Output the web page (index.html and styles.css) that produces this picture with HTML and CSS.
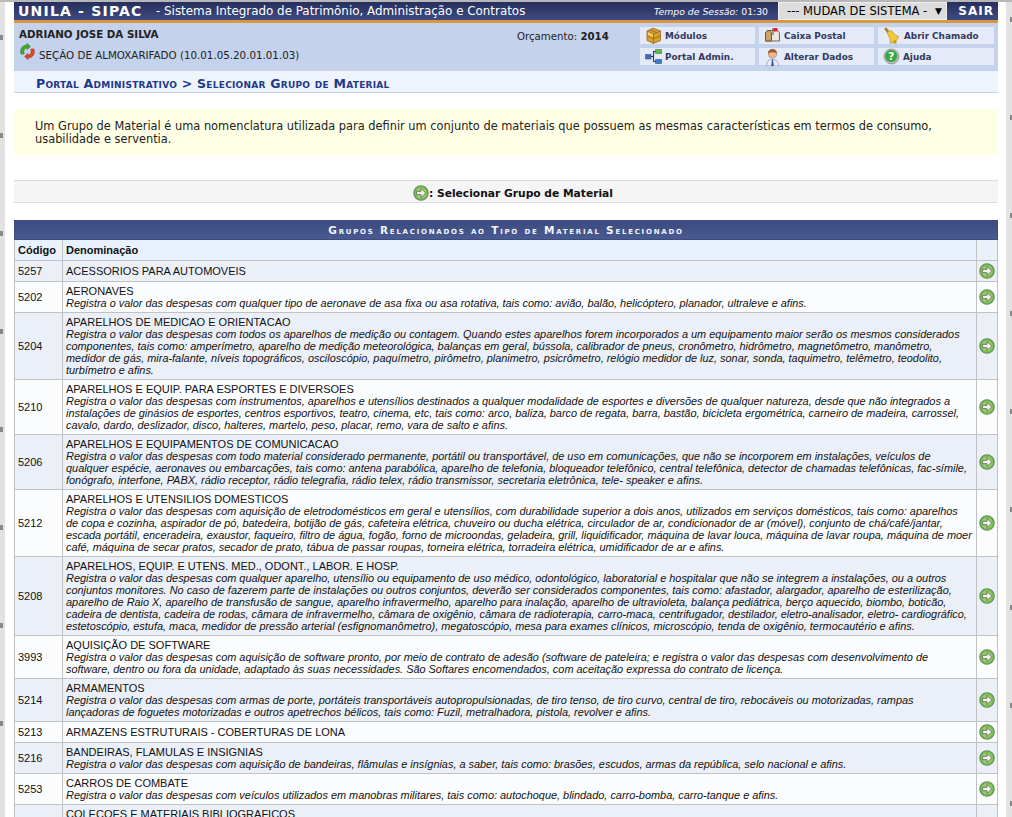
FILE: index.html
```html
<!DOCTYPE html>
<html lang="pt-BR">
<head>
	<meta charset="UTF-8">
	<title>SIPAC - Selecionar Grupo de Material</title>
	<link rel="stylesheet" href="styles.css">
</head>
<body>
	<svg class="defs" width="0" height="0">
		<symbol id="seta" viewBox="0 0 16 16">
			<circle cx="8" cy="8" r="7.2" fill="#7cba52" stroke="#5d8f5a" stroke-width="1.1"/>
			<circle cx="8" cy="8" r="5.2" fill="#9ccf6a"/>
			<path d="M3.6 6.3H8V3.4L12.8 8 8 12.6V9.7H3.6z" fill="#f2f2ee" stroke="#5f6f5c" stroke-width=".9"/>
		</symbol>
	</svg>

	<div class="pagina">
		<div class="topo">
			<span class="topo_sigla">UNILA - SIPAC</span>
			<span class="topo_nome">- Sistema Integrado de Patrimônio, Administração e Contratos</span>
			<span class="topo_tempo"><em>Tempo de Sessão:</em> 01:30</span>
			<div class="topo_sistema"><span>--- MUDAR DE SISTEMA -</span><span class="topo_seta">▼</span></div>
			<a class="topo_sair">SAIR</a>
		</div>

		<div class="info">
			<div class="info_usuario">
				<strong>ADRIANO JOSE DA SILVA</strong>
				<div class="info_unidade">
					<svg width="17" height="17" viewBox="0 0 17 17">
						<path d="M2 11C.6 6 3.5 2 8 2V.4l3.4 3L8 6.500V4.800C5.500 5 4 8 5.300 11z" fill="#45a832" stroke="#2d7a24" stroke-width=".6"/>
						<path d="M15 6c1.400 5-1.500 9-6 9v1.600l-3.400-3L9 10.500v1.700c2.500-.2 4-3.200 2.700-6.200z" fill="#e2492c" stroke="#a8301c" stroke-width=".6"/>
					</svg>
					<span>SEÇÃO DE ALMOXARIFADO (10.01.05.20.01.01.03)</span>
				</div>
			</div>
			<div class="info_orcamento">Orçamento: <strong>2014</strong></div>
			<div class="atalhos">
				<a class="atalho">
					<svg width="17" height="17" viewBox="0 0 17 17">
						<path d="M2 4l6-2.800L15.500 4v9.500L8.500 16.400 2 13.500z" fill="#d9a02c" stroke="#94691a" stroke-width=".8"/>
						<path d="M2 4l6.500 3 7-3M8.500 7v9.400M2 8.800l6.500 3 7-3M5 2.800l7 3" fill="none" stroke="#8f6a20" stroke-width=".8"/>
						<path d="M3 5l5 2.300v3L3 8z" fill="#f2cb62"/>
					</svg>
					Módulos
				</a>
				<a class="atalho">
					<svg width="17" height="17" viewBox="0 0 17 17">
						<path d="M1.500 7c0-2 1.500-3.500 3-3.500h8c1.800 0 3 1.500 3 3.500v7h-14z" fill="#e9e7df" stroke="#77654a"/>
						<path d="M1.500 7c0-2 1.500-3.500 3-3.500S7.500 5 7.500 7v7h-6z" fill="#c9a36a" stroke="#6d5636"/>
						<path d="M8.500 1h1v7h-1z" fill="#6b4a3a"/>
						<path d="M9.500 1h4v3.500h-4z" fill="#d8232a"/>
					</svg>
					Caixa Postal
				</a>
				<a class="atalho">
					<svg width="18" height="18" viewBox="0 0 18 18">
						<path d="M1 1.500L3.500.500l3 4-2.500 1.500z" fill="#a8812c"/>
						<path d="M5 4.500c2-1.500 4.500-.5 5.500 1.500 1 2 3 2.500 5 3.500 0 3-4.500 6-8 7-.5-2 0-4-1-6-.9-1.800-2.500-3.500-1.500-6z" fill="#f1cb35" stroke="#b98f1c" stroke-width=".7"/>
						<circle cx="12" cy="15" r="1.700" fill="#c2931e"/>
					</svg>
					Abrir Chamado
				</a>
				<a class="atalho">
					<svg width="17" height="17" viewBox="0 0 17 17">
						<path d="M.500 6.500h5.500v4.500H.500z" fill="#3d6fb8" stroke="#2a4f8a" stroke-width=".6"/>
						<path d="M10.500 1.500h6v4h-6z" fill="#5fb848" stroke="#3a8a2a" stroke-width=".6"/>
						<path d="M10.500 11.500h6v4h-6z" fill="#3d7fc8" stroke="#2a4f8a" stroke-width=".6"/>
						<path d="M6 8.500h2.500V3.500h2M8.500 8.500v5h2" fill="none" stroke="#26365e" stroke-width="1.100"/>
					</svg>
					Portal Admin.
				</a>
				<a class="atalho">
					<svg width="17" height="18" viewBox="0 0 17 18">
						<path d="M2.500 18c0-5 2.500-6.500 6-6.500s6 1.500 6 6.500z" fill="#e8ecf6" stroke="#8a93b8" stroke-width=".7"/>
						<path d="M8 11.500h1l.8 6.500H7.200z" fill="#3c4aa0"/>
						<circle cx="8.500" cy="6" r="4.200" fill="#e8b58c" stroke="#a8744c" stroke-width=".6"/>
						<path d="M4 5.500C4 2.500 6 1 8.500 1S13 2.500 13 5.500C10 3.800 7 4 4 5.500z" fill="#9a5a2a"/>
					</svg>
					Alterar Dados
				</a>
				<a class="atalho">
					<svg width="17" height="17" viewBox="0 0 17 17">
						<circle cx="8.500" cy="8.500" r="7.500" fill="#b8b8b8" stroke="#7c7c7c" stroke-width=".6"/>
						<circle cx="8.200" cy="8" r="6" fill="#33a83a"/>
						<text x="8.200" y="12" class="atalho_q">?</text>
					</svg>
					Ajuda
				</a>
			</div>
		</div>

		<div class="caminho">Portal Administrativo &gt; Selecionar Grupo de Material</div>

		<div class="descricao">
			Um Grupo de Material é uma nomenclatura utilizada para definir um conjunto de materiais que possuem as mesmas características em termos de consumo, usabilidade e serventia.
		</div>

		<div class="legenda">
			<svg width="16" height="16"><use href="#seta"/></svg>
			<span>: Selecionar Grupo de Material</span>
		</div>

		<table class="listagem">
			<colgroup>
				<col class="col_cod">
				<col>
				<col class="col_acao">
			</colgroup>
			<thead>
				<tr><th class="listagem_titulo" colspan="3">Grupos Relacionados ao Tipo de Material Selecionado</th></tr>
				<tr class="listagem_cab"><th>Código</th><th>Denominação</th><th></th></tr>
			</thead>
			<tbody>
				<tr>
					<td>5257</td>
					<td>ACESSORIOS PARA AUTOMOVEIS</td>
					<td class="td_acao"><svg width="16" height="16"><use href="#seta"/></svg></td>
				</tr>
				<tr>
					<td>5202</td>
					<td>AERONAVES<br><em>Registra o valor das despesas com qualquer tipo de aeronave de asa fixa ou asa rotativa, tais como: avião, balão, helicóptero, planador, ultraleve e afins.</em></td>
					<td class="td_acao"><svg width="16" height="16"><use href="#seta"/></svg></td>
				</tr>
				<tr>
					<td>5204</td>
					<td>APARELHOS DE MEDICAO E ORIENTACAO<br><em>Registra o valor das despesas com todos os aparelhos de medição ou contagem. Quando estes aparelhos forem incorporados a um equipamento maior serão os mesmos considerados componentes, tais como: amperímetro, aparelho de medição meteorológica, balanças em geral, bússola, calibrador de pneus, cronômetro, hidrômetro, magnetômetro, manômetro, medidor de gás, mira-falante, níveis topográficos, osciloscópio, paquímetro, pirômetro, planimetro, psicrômetro, relógio medidor de luz, sonar, sonda, taquimetro, telêmetro, teodolito, turbímetro e afins.</em></td>
					<td class="td_acao"><svg width="16" height="16"><use href="#seta"/></svg></td>
				</tr>
				<tr>
					<td>5210</td>
					<td>APARELHOS E EQUIP. PARA ESPORTES E DIVERSOES<br><em>Registra o valor das despesas com instrumentos, aparelhos e utensílios destinados a qualquer modalidade de esportes e diversões de qualquer natureza, desde que não integrados a instalações de ginásios de esportes, centros esportivos, teatro, cinema, etc, tais como: arco, baliza, barco de regata, barra, bastão, bicicleta ergométrica, carneiro de madeira, carrossel, cavalo, dardo, deslizador, disco, halteres, martelo, peso, placar, remo, vara de salto e afins.</em></td>
					<td class="td_acao"><svg width="16" height="16"><use href="#seta"/></svg></td>
				</tr>
				<tr>
					<td>5206</td>
					<td>APARELHOS E EQUIPAMENTOS DE COMUNICACAO<br><em>Registra o valor das despesas com todo material considerado permanente, portátil ou transportável, de uso em comunicações, que não se incorporem em instalações, veículos de qualquer espécie, aeronaves ou embarcações, tais como: antena parabólica, aparelho de telefonia, bloqueador telefônico, central telefônica, detector de chamadas telefônicas, fac-símile, fonógrafo, interfone, PABX, rádio receptor, rádio telegrafia, rádio telex, rádio transmissor, secretaria eletrônica, tele- speaker e afins.</em></td>
					<td class="td_acao"><svg width="16" height="16"><use href="#seta"/></svg></td>
				</tr>
				<tr>
					<td>5212</td>
					<td>APARELHOS E UTENSILIOS DOMESTICOS<br><em>Registra o valor das despesas com aquisição de eletrodomésticos em geral e utensílios, com durabilidade superior a dois anos, utilizados em serviços domésticos, tais como: aparelhos<br>de copa e cozinha, aspirador de pó, batedeira, botijão de gás, cafeteira elétrica, chuveiro ou ducha elétrica, circulador de ar, condicionador de ar (móvel), conjunto de chá/café/jantar, escada portátil, enceradeira, exaustor, faqueiro, filtro de água, fogão, forno de microondas, geladeira, grill, liquidificador, máquina de lavar louca, máquina de lavar roupa, máquina de moer café, máquina de secar pratos, secador de prato, tábua de passar roupas, torneira elétrica, torradeira elétrica, umidificador de ar e afins.</em></td>
					<td class="td_acao"><svg width="16" height="16"><use href="#seta"/></svg></td>
				</tr>
				<tr>
					<td>5208</td>
					<td>APARELHOS, EQUIP. E UTENS. MED., ODONT., LABOR. E HOSP.<br><em>Registra o valor das despesas com qualquer aparelho, utensílio ou equipamento de uso médico, odontológico, laboratorial e hospitalar que não se integrem a instalações, ou a outros conjuntos monitores. No caso de fazerem parte de instalações ou outros conjuntos, deverão ser considerados componentes, tais como: afastador, alargador, aparelho de esterilização, aparelho de Raio X, aparelho de transfusão de sangue, aparelho infravermelho, aparelho para inalação, aparelho de ultravioleta, balança pediátrica, berço aquecido, biombo, boticão, cadeira de dentista, cadeira de rodas, câmara de infravermelho, câmara de oxigênio, câmara de radioterapia, carro-maca, centrifugador, destilador, eletro-analisador, eletro- cardiográfico, estetoscópio, estufa, maca, medidor de pressão arterial (esfignomanômetro), megatoscópio, mesa para exames clínicos, microscópio, tenda de oxigênio, termocautério e afins.</em></td>
					<td class="td_acao"><svg width="16" height="16"><use href="#seta"/></svg></td>
				</tr>
				<tr>
					<td>3993</td>
					<td>AQUISIÇÃO DE SOFTWARE<br><em>Registra o valor das despesas com aquisição de software pronto, por meio de contrato de adesão (software de pateleira; e registra o valor das despesas com desenvolvimento de software, dentro ou fora da unidade, adaptado às suas necessidades. São Softares encomendados, com aceitação expressa do contrato de licença.</em></td>
					<td class="td_acao"><svg width="16" height="16"><use href="#seta"/></svg></td>
				</tr>
				<tr>
					<td>5214</td>
					<td>ARMAMENTOS<br><em>Registra o valor das despesas com armas de porte, portáteis transportáveis autopropulsionadas, de tiro tenso, de tiro curvo, central de tiro, rebocáveis ou motorizadas, rampas<br>lançadoras de foguetes motorizadas e outros apetrechos bélicos, tais como: Fuzil, metralhadora, pistola, revolver e afins.</em></td>
					<td class="td_acao"><svg width="16" height="16"><use href="#seta"/></svg></td>
				</tr>
				<tr>
					<td>5213</td>
					<td>ARMAZENS ESTRUTURAIS - COBERTURAS DE LONA</td>
					<td class="td_acao"><svg width="16" height="16"><use href="#seta"/></svg></td>
				</tr>
				<tr>
					<td>5216</td>
					<td>BANDEIRAS, FLAMULAS E INSIGNIAS<br><em>Registra o valor das despesas com aquisição de bandeiras, flâmulas e insígnias, a saber, tais como: brasões, escudos, armas da república, selo nacional e afins.</em></td>
					<td class="td_acao"><svg width="16" height="16"><use href="#seta"/></svg></td>
				</tr>
				<tr>
					<td>5253</td>
					<td>CARROS DE COMBATE<br><em>Registra o valor das despesas com veículos utilizados em manobras militares, tais como: autochoque, blindado, carro-bomba, carro-tanque e afins.</em></td>
					<td class="td_acao"><svg width="16" height="16"><use href="#seta"/></svg></td>
				</tr>
				<tr>
					<td></td>
					<td class="td_ultima">COLECOES E MATERIAIS BIBLIOGRAFICOS</td>
					<td class="td_acao"></td>
				</tr>
			</tbody>
		</table>
	</div>
</body>
</html>
```

FILE: styles.css
```css
html {
	height: 817px;
	overflow: hidden;
}

body {
	margin: 0;
	height: 817px;
	overflow: hidden;
	box-sizing: border-box;
	padding-top: 2px;
	font-family: "DejaVu Sans", sans-serif;
	background-color: #FFFFFF;
	background-image:
		linear-gradient(#B8B8B8, #B8B8B8),
		linear-gradient(#888888 0 5px, transparent 5px),
		linear-gradient(#888888 0 5px, transparent 5px),
		linear-gradient(#E2E2E2, #E2E2E2),
		linear-gradient(#E2E2E2, #E2E2E2);
	background-repeat: repeat-x, repeat-y, repeat-y, repeat-y, repeat-y;
	background-size: 100% 2px, 3px 98px, 2px 98px, 5px 100%, 6px 100%;
	background-position: 0 0, 0 35px, 1010px 17px, 0 0, 100% 0;
}

.defs {
	display: block;
	height: 0;
}

.pagina {
	margin: 0 14px;
	width: 984px;
}

/* barra superior */
.topo {
	display: flex;
	align-items: center;
	height: 18px;
	padding-left: 4px;
	color: #FFFFFF;
	background: linear-gradient(#262F5E, #3F4B80);
	border-bottom: 3px solid #D9983F;
}

.topo_sigla {
	font-size: 14px;
	font-weight: bold;
	letter-spacing: 1.2px;
	width: 138px;
	white-space: nowrap;
}

.topo_nome {
	font-size: 11.9px;
	width: 498px;
	white-space: nowrap;
}

.topo_tempo {
	font-size: 9.3px;
	width: 124px;
	white-space: nowrap;
}

.topo_sistema {
	display: flex;
	justify-content: space-between;
	align-items: center;
	box-sizing: border-box;
	width: 169px;
	height: 18px;
	padding: 0 4px 0 8px;
	color: #000000;
	background-color: #DCDCDC;
	border: 1px solid #F0F0F0;
	font-size: 11.5px;
}

.topo_seta {
	font-size: 9px;
}

.topo_sair {
	flex-grow: 1;
	padding-right: 4px;
	text-align: right;
	font-size: 12px;
	font-weight: bold;
	letter-spacing: 1px;
}

/* usuario e atalhos */
.info {
	display: flex;
	height: 48px;
	background-color: #C4D2EB;
	color: #222222;
}

.info_usuario {
	width: 448px;
	padding: 5px 0 0 5px;
	font-size: 10.3px;
}

.info_unidade {
	display: flex;
	align-items: flex-start;
	gap: 3px;
	margin-top: 3px;
}

.info_unidade span {
	margin-top: 6px;
}

.info_orcamento {
	box-sizing: border-box;
	width: 173px;
	padding-top: 8px;
	padding-left: 50px;
	font-size: 10.2px;
	white-space: nowrap;
}

.atalhos {
	display: grid;
	grid-template-columns: 115px 115px 116px;
	grid-auto-rows: 17px;
	gap: 4px;
	padding-top: 4px;
}

.atalho {
	display: flex;
	align-items: center;
	gap: 3px;
	padding-left: 5px;
	background-color: #E4EAF7;
	color: #333A5E;
	font-size: 8.9px;
	font-weight: bold;
}

.atalho_q {
	font-family: "DejaVu Sans", sans-serif;
	font-size: 11px;
	font-weight: bold;
	fill: #FFFFFF;
	text-anchor: middle;
}

/* caminho */
.caminho {
	height: 21px;
	line-height: 25px;
	padding-left: 22px;
	background-color: #EFF3FB;
	border-bottom: 1px solid #C4D2EB;
	color: #1C3A8C;
	font-size: 12.5px;
	font-weight: bold;
	font-variant: small-caps;
	letter-spacing: 0.25px;
}

.descricao {
	margin-top: 16px;
	padding: 11px 21px;
	height: 25px;
	background-color: #FFFFE5;
	color: #222222;
	font-size: 11.4px;
	line-height: 13px;
}

.legenda {
	display: flex;
	justify-content: center;
	align-items: center;
	box-sizing: border-box;
	height: 23px;
	margin-top: 24px;
	padding-top: 3px;
	padding-left: 14px;
	background-color: #F5F5F5;
	border-top: 1px solid #DDDDDD;
	border-bottom: 1px solid #DDDDDD;
	font-size: 10.7px;
	font-weight: bold;
	color: #111111;
}

/* listagem */
.listagem {
	width: 984px;
	margin-top: 17px;
	table-layout: fixed;
	border-collapse: collapse;
	font-family: "Liberation Sans", Arial, sans-serif;
	font-size: 11px;
	line-height: 12px;
	color: #111111;
}

.listagem em {
	font-size: 10.92px;
}

.col_cod {
	width: 48px;
}

.col_acao {
	width: 21px;
}

.listagem th,
.listagem td {
	padding: 3px;
	border: 1px solid #C2C2C2;
}

.listagem tbody tr:nth-child(odd) {
	background-color: #EBF0F8;
}

.listagem tbody tr:nth-child(even) {
	background-color: #FBFCFE;
}

.listagem .listagem_titulo {
	height: 19px;
	padding: 0;
	box-sizing: border-box;
	background: linear-gradient(#3B4B7F, #4A5B92);
	border: 1px solid #3B4B7F;
	color: #F2F4FA;
	font-family: "DejaVu Sans", sans-serif;
	font-size: 10.5px;
	font-variant: small-caps;
	letter-spacing: 1.75px;
	text-align: center;
}

.listagem_cab th {
	height: 14px;
	background-color: #E8F1FC;
	font-weight: bold;
	text-align: left;
}

.listagem td.td_acao {
	padding: 2px;
}

.td_acao svg {
	display: block;
	margin: 0 auto;
}

.td_ultima {
	height: 60px;
	vertical-align: top;
}
```
